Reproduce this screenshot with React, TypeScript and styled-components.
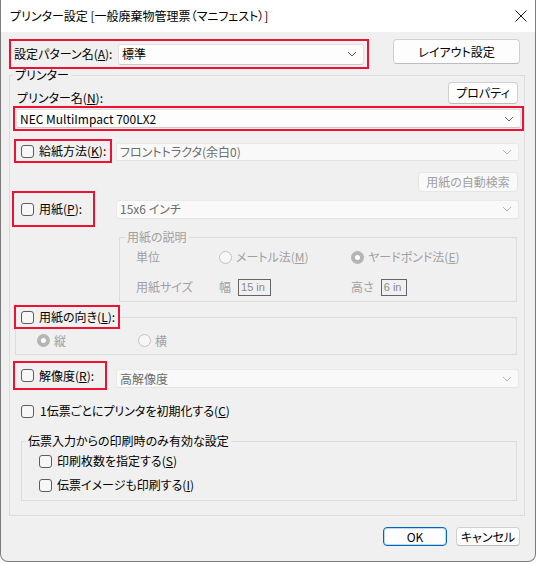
import React from 'react'
import styled, { createGlobalStyle, css } from 'styled-components'

const GlobalStyle = createGlobalStyle`
  html, body {
    margin: 0;
    padding: 0;
    background: #ffffff;
  }
  body {
    font-family: "Noto Sans CJK JP", "Liberation Sans", sans-serif;
    font-size: 12px;
    font-feature-settings: "palt";
    color: #000;
  }
  u {
    text-underline-offset: 1px;
    text-decoration-thickness: 1px;
  }
`

const disabledText = '#a0a0a0'

const Window = styled.div`
  width: 536px;
  height: 562px;
  box-sizing: border-box;
  border: 1px solid #7d7d7d;
  border-top: none;
  border-radius: 0 0 8px 8px;
  background: #f0f0f0;
  display: flex;
  flex-direction: column;
  overflow: hidden;
`

const TitleBar = styled.div`
  height: 32px;
  flex: none;
  background: #ffffff;
  display: flex;
  align-items: center;
  justify-content: space-between;
  padding: 0 8px 0 9px;
  line-height: 14px;
`

const CloseBtn = styled.div`
  width: 12px;
  height: 12px;
  display: flex;
`

const Content = styled.div`
  padding: 7px 10px 0 8px;
  display: flex;
  flex-direction: column;
`

const TopRow = styled.div`
  display: flex;
  align-items: flex-start;
`

const RedBox = styled.div<{ $w: number; $h: number; $pl?: number }>`
  box-sizing: border-box;
  width: ${p => p.$w}px;
  height: ${p => p.$h}px;
  border: 2px solid #ee1133;
  display: flex;
  align-items: center;
  gap: 5px;
  padding-left: ${p => p.$pl ?? 3}px;
  flex: none;
`

const Label = styled.span<{ $disabled?: boolean }>`
  line-height: 14px;
  white-space: nowrap;
  color: ${p => (p.$disabled ? disabledText : '#000')};
`

const Combo = styled.div<{ $w?: number; $h: number; $disabled?: boolean }>`
  box-sizing: border-box;
  width: ${p => (p.$w ? `${p.$w}px` : 'auto')};
  height: ${p => p.$h}px;
  flex: ${p => (p.$w ? 'none' : '1')};
  border: 1px solid ${p => (p.$disabled ? '#e9e9e9' : '#e2e2e2')};
  border-bottom-color: ${p => (p.$disabled ? '#e4e4e4' : '#c9c9c9')};
  border-radius: 3px;
  background: ${p => (p.$disabled ? '#f9f9f9' : '#fdfdfd')};
  color: ${p => (p.$disabled ? '#6d6d6d' : '#000')};
  display: flex;
  align-items: center;
  justify-content: space-between;
  padding: 0 6px 0 3px;
  line-height: 14px;
  white-space: nowrap;
`

const Button = styled.div<{ $w: number; $h: number; $primary?: boolean; $disabled?: boolean }>`
  box-sizing: border-box;
  width: ${p => p.$w}px;
  height: ${p => p.$h}px;
  flex: none;
  border: 1px solid #d0d0d0;
  border-bottom-color: #bcbcbc;
  border-radius: 4px;
  background: #fdfdfd;
  display: flex;
  align-items: center;
  justify-content: center;
  line-height: 14px;
  color: ${p => (p.$disabled ? disabledText : '#000')};
  ${p =>
    p.$disabled &&
    css`
      border-color: #e6e6e6;
      background: #f9f9f9;
    `}
  ${p =>
    p.$primary &&
    css`
      border: 1px solid #0067c0;
      box-shadow: inset 0 0 0 1px rgba(0, 103, 192, 0.25);
    `}
`

const Group = styled.fieldset<{ $ml: number; $mr: number; $mt: number; $pt?: number; $pb?: number }>`
  margin: ${p => p.$mt}px ${p => p.$mr}px 0 ${p => p.$ml}px;
  padding: ${p => p.$pt ?? 0}px 0 ${p => p.$pb ?? 0}px 0;
  border: 1px solid #dcdcdc;
  min-width: 0;
  display: flex;
  flex-direction: column;
`

const Legend = styled.legend<{ $ml: number; $disabled?: boolean }>`
  margin-left: ${p => p.$ml}px;
  padding: 0 2px;
  line-height: 12px;
  color: ${p => (p.$disabled ? disabledText : '#000')};
`

const RedLegend = styled.legend<{ $ml: number }>`
  margin-left: ${p => p.$ml}px;
  padding: 0;
`

const Row = styled.div<{ $mt?: number; $ml?: number; $mr?: number; $h?: number }>`
  display: flex;
  align-items: center;
  margin: ${p => p.$mt ?? 0}px ${p => p.$mr ?? 0}px 0 ${p => p.$ml ?? 0}px;
  ${p => p.$h && `height: ${p.$h}px;`}
`

const NameRow = styled.div`
  height: 24px;
  display: flex;
  justify-content: space-between;
  align-items: flex-start;
  padding: 0 6px 0 7px;
  span {
    align-self: flex-end;
    margin-bottom: 1px;
  }
`

const CheckRow = styled.label<{ $gap?: number; $mt?: number }>`
  display: flex;
  align-items: center;
  gap: ${p => p.$gap ?? 5}px;
  height: 14px;
  margin-top: ${p => p.$mt ?? 0}px;
`

const Check = styled.span`
  box-sizing: border-box;
  width: 13px;
  height: 13px;
  flex: none;
  border: 1px solid #5d5d5d;
  border-radius: 3px;
  background: #f7f7f7;
`

const Radio = styled.span<{ $checked?: boolean }>`
  box-sizing: border-box;
  width: 13px;
  height: 13px;
  flex: none;
  border-radius: 50%;
  border: ${p => (p.$checked ? '4px solid #b5b5b5' : '1px solid #c2c2c2')};
  background: ${p => (p.$checked ? '#ffffff' : '#f7f7f7')};
`

const Option = styled.div<{ $w?: number }>`
  display: flex;
  align-items: center;
  gap: 4px;
  ${p => p.$w && `width: ${p.$w}px;`}
  flex: none;
`

const DescGrid = styled.div`
  display: grid;
  grid-template-columns: 83px 132px auto;
  grid-auto-rows: 14px;
  row-gap: 16px;
  align-items: center;
  margin-left: 16px;
  color: ${disabledText};
  line-height: 14px;
`

const SizeCell = styled.div`
  display: flex;
  align-items: center;
  gap: 7px;
`

const ValueBox = styled.span<{ $w: number }>`
  box-sizing: border-box;
  width: ${p => p.$w}px;
  height: 17px;
  border: 1px solid #646464;
  padding: 0 2px;
  line-height: 15px;
  color: #8a8a8a;
  font-family: "Liberation Sans", sans-serif;
  font-size: 11px;
  white-space: nowrap;
  overflow: hidden;
`

const Footer = styled.div`
  display: flex;
  justify-content: flex-end;
  gap: 9px;
  margin: 11px 5px 0 0;
`

const Chevron = ({ disabled }: { disabled?: boolean }) => (
  <svg width="10" height="6" viewBox="0 0 10 6">
    <path d="M1 1 L5 5 L9 1" fill="none" stroke={disabled ? '#b4b4b4' : '#6a6a6a'} strokeWidth="1" />
  </svg>
)

const App = () => {
  return (
    <>
      <GlobalStyle />
      <Window>
        <TitleBar>
          <Label>プリンター設定 [一般廃棄物管理票（マニフェスト）]</Label>
          <CloseBtn>
            <svg width="12" height="12" viewBox="0 0 12 12">
              <path d="M0.5 0.5 L11.5 11.5 M11.5 0.5 L0.5 11.5" stroke="#1a1a1a" strokeWidth="1" />
            </svg>
          </CloseBtn>
        </TitleBar>

        <Content>
          <TopRow>
            <RedBox $w={360} $h={30} $pl={3}>
              <Label>設定パターン名(<u>A</u>):</Label>
              <Combo $w={246} $h={21} style={{ marginLeft: 'auto', marginRight: 3 }}>
                <span>標準</span>
                <Chevron />
              </Combo>
            </RedBox>
            <Button $w={127} $h={25} style={{ marginLeft: 24 }}>レイアウト設定</Button>
          </TopRow>

          <Group $ml={0} $mr={0} $mt={0} $pt={1} $pb={14}>
            <Legend $ml={3}>プリンター</Legend>
            <NameRow>
              <Label>プリンター名(<u>N</u>):</Label>
              <Button $w={70} $h={22}>プロパティ</Button>
            </NameRow>
            <Row $ml={3} $mr={1}>
              <RedBox $w={511} $h={25} $pl={1} style={{ paddingRight: 1 }}>
                <Combo $h={19}>
                  <span>NEC MultiImpact 700LX2</span>
                  <Chevron />
                </Combo>
              </RedBox>
            </Row>

            <Row $mt={8} $ml={4} $mr={5}>
              <RedBox $w={98} $h={24} $pl={5}>
                <Check />
                <Label>給紙方法(<u>K</u>):</Label>
              </RedBox>
              <Combo $w={403} $h={18} $disabled style={{ marginLeft: 'auto', marginTop: 1 }}>
                <span>フロントトラクタ(余白0)</span>
                <Chevron disabled />
              </Combo>
            </Row>

            <Row $mt={9} $mr={6} style={{ justifyContent: 'flex-end' }}>
              <Button $w={100} $h={20} $disabled>用紙の自動検索</Button>
            </Row>

            <Row $mt={-1} $ml={2} $mr={5}>
              <RedBox $w={83} $h={36} $pl={7}>
                <Check />
                <Label>用紙(<u>P</u>):</Label>
              </RedBox>
              <Combo $w={403} $h={19} $disabled style={{ marginLeft: 'auto' }}>
                <span>15x6 インチ</span>
                <Chevron disabled />
              </Combo>
            </Row>

            <Group $ml={109} $mr={7} $mt={4} $pt={7} $pb={7}>
              <Legend $ml={5} $disabled>用紙の説明</Legend>
              <DescGrid>
                <span>単位</span>
                <Option>
                  <Radio />
                  <span>メートル法(<u>M</u>)</span>
                </Option>
                <Option>
                  <Radio $checked />
                  <span>ヤードポンド法(<u>E</u>)</span>
                </Option>
                <span>用紙サイズ</span>
                <SizeCell>
                  <span>幅</span>
                  <ValueBox $w={33}>15 in</ValueBox>
                </SizeCell>
                <SizeCell>
                  <span>高さ</span>
                  <ValueBox $w={26}>6 in</ValueBox>
                </SizeCell>
              </DescGrid>
            </Group>

            <Group $ml={5} $mr={7} $mt={3} $pt={4} $pb={7}>
              <RedLegend $ml={-2}>
                <RedBox $w={106} $h={24} $pl={5}>
                  <Check />
                  <Label>用紙の向き(<u>L</u>):</Label>
                </RedBox>
              </RedLegend>
              <Row $h={14} $ml={21} style={{ color: disabledText }}>
                <Option $w={101}>
                  <Radio $checked />
                  <span>縦</span>
                </Option>
                <Option>
                  <Radio />
                  <span>横</span>
                </Option>
              </Row>
            </Group>

            <Row $mt={6} $ml={3} $mr={5} style={{ alignItems: 'flex-start' }}>
              <RedBox $w={94} $h={29} $pl={6}>
                <Check />
                <Label>解像度(<u>R</u>):</Label>
              </RedBox>
              <Combo $w={403} $h={19} $disabled style={{ marginLeft: 'auto', marginTop: 8 }}>
                <span>高解像度</span>
                <Chevron disabled />
              </Combo>
            </Row>

            <Row $mt={14} $ml={11}>
              <CheckRow $gap={6}>
                <Check />
                <Label>1伝票ごとにプリンタを初期化する(<u>C</u>)</Label>
              </CheckRow>
            </Row>

            <Group $ml={11} $mr={7} $mt={17} $pt={7} $pb={8}>
              <Legend $ml={4}>伝票入力からの印刷時のみ有効な設定</Legend>
              <Row $ml={17} style={{ flexDirection: 'column', alignItems: 'flex-start' }}>
                <CheckRow>
                  <Check />
                  <Label>印刷枚数を指定する(<u>S</u>)</Label>
                </CheckRow>
                <CheckRow $mt={10}>
                  <Check />
                  <Label>伝票イメージも印刷する(<u>I</u>)</Label>
                </CheckRow>
              </Row>
            </Group>
          </Group>

          <Footer>
            <Button $w={64} $h={19} $primary>OK</Button>
            <Button $w={64} $h={19}>キャンセル</Button>
          </Footer>
        </Content>
      </Window>
    </>
  )
}

export default App
